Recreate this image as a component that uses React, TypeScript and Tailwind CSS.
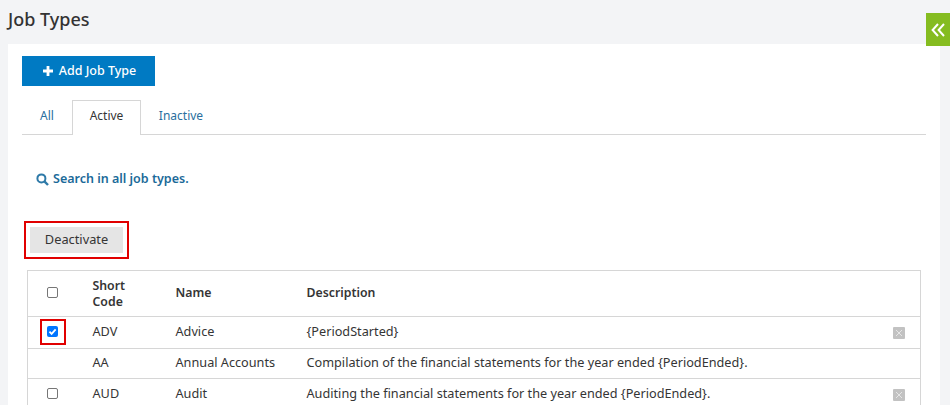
import React from "react";

const rows = [
  { code: "ADV", name: "Advice", desc: "{PeriodStarted}", check: "on", del: true, h: "h-[32px]" },
  { code: "AA", name: "Annual Accounts", desc: "Compilation of the financial statements for the year ended {PeriodEnded}.", check: "none", del: false, h: "h-[30px]" },
  { code: "AUD", name: "Audit", desc: "Auditing the financial statements for the year ended {PeriodEnded}.", check: "off", del: true, h: "h-[32px]" },
];

function Box() {
  return <span className="block w-[11px] h-[11px] rounded-[2px] border border-[#767676] bg-white" />;
}

function BoxOn() {
  return (
    <span className="flex w-[11px] h-[11px] rounded-[2px] bg-[#0075ff] items-center justify-center">
      <svg width="9" height="9" viewBox="0 0 10 10" fill="none">
        <path d="M1.6 5.2 4 7.6 8.5 2.6" stroke="#fff" strokeWidth="2" />
      </svg>
    </span>
  );
}

function Remove() {
  return (
    <span className="flex w-[12px] h-[12px] rounded-[1px] bg-[#c2c2c2] items-center justify-center">
      <svg width="8" height="8" viewBox="0 0 8 8" fill="none">
        <path d="M1 1 7 7M7 1 1 7" stroke="#e6e6e6" strokeWidth="1" />
      </svg>
    </span>
  );
}

export default function App() {
  return (
    <div className="relative h-[405px] overflow-hidden bg-[#f3f4f6] font-['Noto_Sans',sans-serif] text-[12.3px] text-[#353535]">
      <h1 className="h-[44px] pl-2 pt-[4px] text-[18px] leading-[30px] font-medium text-[#333]">Job Types</h1>

      <div className="absolute right-0 top-[13px] w-[24px] h-[33px] bg-[#85bc20] flex items-center justify-center">
        <svg width="15" height="14" viewBox="0 0 15 14" fill="none">
          <path d="M7 1 1.6 7 7 13M13 1 7.6 7 13 13" stroke="#fff" strokeWidth="2" />
        </svg>
      </div>

      <div className="mx-2 w-[932px] h-[361px] bg-white pt-3 pl-[14px] pr-[14px]">
        <button className="flex items-center justify-center gap-[6px] w-[133px] h-[30px] pl-[2px] bg-[#007ac3] text-white text-[12.5px] font-medium">
          <svg width="10" height="10" viewBox="0 0 10 10">
            <path d="M3.6 0h2.8v3.6H10v2.8H6.4V10H3.6V6.4H0V3.6h3.6z" fill="#fff" />
          </svg>
          Add Job Type
        </button>

        <div className="mt-[14px] flex h-[35px] border-b border-[#d6d6d6] w-[904px] text-[12px]">
          <a className="w-[50px] pb-[2px] flex items-center justify-center text-[#2a6f9e]">All</a>
          <a className="w-[69px] h-[35px] pb-[4px] flex items-center justify-center border border-b-0 border-[#d6d6d6] bg-white text-[#353535]">Active</a>
          <a className="w-[62px] ml-[9px] pb-[2px] flex items-center justify-center text-[#2a6f9e]">Inactive</a>
        </div>

        <div className="mt-[35px] ml-[14px] flex items-center gap-[4px] h-[18px] text-[12.5px] font-semibold text-[#1b6a99]">
          <svg width="13" height="13" viewBox="0 0 13 13" fill="none">
            <circle cx="5.4" cy="5.4" r="4" stroke="#2f7aa8" strokeWidth="2" />
            <path d="M8.4 8.4 12 12" stroke="#2f7aa8" strokeWidth="2.4" />
          </svg>
          Search in all job types.
        </div>

        <div className="mt-[33px] ml-[2px] w-[105px] h-[38px] border-2 border-[#e10000] p-1">
          <button className="w-full h-full bg-[#e5e5e5] text-[12.8px] text-[#353535]">Deactivate</button>
        </div>

        <table className="mt-[11px] ml-[5px] w-[894px] table-fixed border-collapse border border-[#d6d6d6]">
          <thead>
            <tr className="h-[46px] border-b border-[#d6d6d6] text-left font-semibold">
              <th className="w-[65px] pb-[3px]">
                <span className="flex justify-center pr-[16px]"><Box /></span>
              </th>
              <th className="w-[83px] font-semibold leading-[16px]">Short<br />Code</th>
              <th className="w-[131px] font-semibold">Name</th>
              <th className="font-semibold">Description</th>
              <th className="w-[40px]" />
            </tr>
          </thead>
          <tbody className="text-[12.7px]">
            {rows.map((r) => (
              <tr key={r.code} className={r.h + " border-b border-[#d6d6d6]"}>
                <td className="relative pb-[2px]">
                  <span className="flex justify-center pr-[16px]">
                    {r.check === "on" && <BoxOn />}
                    {r.check === "off" && <Box />}
                  </span>
                  {r.check === "on" && (
                    <span className="absolute left-[12px] top-[2px] w-[26px] h-[26px] border-2 border-[#e10000]" />
                  )}
                </td>
                <td className="pb-[2px]">{r.code}</td>
                <td className="pb-[2px]">{r.name}</td>
                <td className="pb-[2px]">{r.desc}</td>
                <td>
                  <span className="flex justify-end pr-[15px]">{r.del && <Remove />}</span>
                </td>
              </tr>
            ))}
          </tbody>
        </table>
      </div>
    </div>
  );
}
